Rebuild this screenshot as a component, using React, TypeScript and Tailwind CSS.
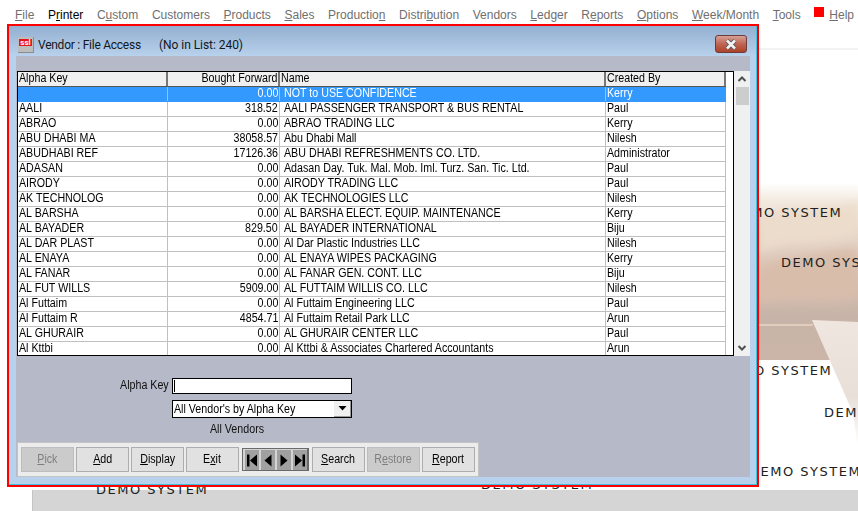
import React from "react";

const menu: [string, string, string][] = [
  ["", "F", "ile"], ["P", "r", "inter"], ["C", "u", "stom"], ["Customers", "", ""], ["", "P", "roducts"],
  ["", "S", "ales"], ["Productio", "n", ""], ["Distri", "b", "ution"], ["Vendors", "", ""], ["", "L", "edger"],
  ["R", "e", "ports"], ["", "O", "ptions"], ["", "W", "eek/Month"], ["", "T", "ools"],
];

const rows: [string, string, string, string][] = [
  ["", "0.00", "NOT to USE CONFIDENCE", "Kerry"],
  ["AALI", "318.52", "AALI PASSENGER TRANSPORT & BUS RENTAL", "Paul"],
  ["ABRAO", "0.00", "ABRAO TRADING LLC", "Kerry"],
  ["ABU DHABI MA", "38058.57", "Abu Dhabi Mall", "Nilesh"],
  ["ABUDHABI REF", "17126.36", "ABU DHABI REFRESHMENTS CO. LTD.", "Administrator"],
  ["ADASAN", "0.00", "Adasan Day. Tuk. Mal. Mob. Iml. Turz. San. Tic. Ltd.", "Paul"],
  ["AIRODY", "0.00", "AIRODY TRADING LLC", "Paul"],
  ["AK TECHNOLOG", "0.00", "AK TECHNOLOGIES LLC", "Nilesh"],
  ["AL BARSHA", "0.00", "AL BARSHA ELECT. EQUIP. MAINTENANCE", "Kerry"],
  ["AL BAYADER", "829.50", "AL BAYADER INTERNATIONAL", "Biju"],
  ["AL DAR PLAST", "0.00", "Al Dar Plastic Industries LLC", "Nilesh"],
  ["AL ENAYA", "0.00", "AL ENAYA WIPES PACKAGING", "Kerry"],
  ["AL FANAR", "0.00", "AL FANAR GEN. CONT. LLC", "Biju"],
  ["AL FUT WILLS", "5909.00", "AL FUTTAIM WILLIS CO. LLC", "Nilesh"],
  ["Al Futtaim", "0.00", "Al Futtaim Engineering LLC", "Paul"],
  ["Al Futtaim R", "4854.71", "Al Futtaim Retail Park LLC", "Arun"],
  ["AL GHURAIR", "0.00", "AL GHURAIR CENTER LLC", "Paul"],
  ["Al Kttbi", "0.00", "Al Kttbi & Associates Chartered Accountants", "Arun"],
];

const marks: [number, number, string][] = [
  [730, 206, "DEMO SYSTEM"], [781, 256, "DEMO SYSTEM"], [720, 364, "DEMO SYSTEM"],
  [824, 406, "DEMO SYSTEM"], [749, 465, "DEMO SYSTEM"], [96, 483, "DEMO SYSTEM"], [481, 478, "DEMO SYSTEM"],
];

/* The app's condensed system face: tall Arial-like glyphs, about 0.89 of normal width. */
function L({ children }: { children: React.ReactNode }) {
  return <span className="inline-block whitespace-nowrap origin-left scale-x-[0.89]">{children}</span>;
}
function R({ children }: { children: React.ReactNode }) {
  return <span className="inline-block whitespace-nowrap origin-right scale-x-[0.89]">{children}</span>;
}
function C({ children }: { children: React.ReactNode }) {
  return <span className="inline-block whitespace-nowrap origin-center scale-x-[0.89]">{children}</span>;
}

function Btn({ pre = "", u, post, off = false }: { pre?: string; u: string; post: string; off?: boolean }) {
  return (
    <div className={`w-[53px] h-[25px] border flex items-center justify-center ${off ? "bg-[#cbcbcb] border-[#bdbdbd] text-[#7f7f7f]" : "bg-[#e1e1e1] border-[#adadad] text-black"}`}>
      <C>{pre}<u>{u}</u>{post}</C>
    </div>
  );
}

function Nav({ d }: { d: string }) {
  return (
    <div className="w-[16px] h-full bg-[#a0a0a0] border-l-2 border-t border-[#d4d4d4] flex items-center justify-center">
      <svg width="12" height="15" viewBox="0 0 12 14"><path d={d} fill="#000" /></svg>
    </div>
  );
}

export default function App() {
  return (
    <div className="relative w-[858px] h-[511px] overflow-hidden bg-white text-[12px] leading-[15px] text-black" style={{ fontFamily: '"Liberation Sans", Arial, sans-serif' }}>
      {/* desktop backdrop */}
      <div className="absolute left-[759px] right-0 top-[48px] h-[2px] bg-[#f2f2f2]" />
      <svg className="absolute left-[759px] top-[178px]" width="99" height="190" viewBox="0 0 99 190">
        <defs>
          <linearGradient id="bg" x1="0" y1="0" x2="0" y2="1">
            <stop offset="0" stopColor="#fff" />
            <stop offset="0.1" stopColor="#f3eadf" />
            <stop offset="0.45" stopColor="#dcc7b8" />
            <stop offset="0.75" stopColor="#c8b3a8" />
            <stop offset="1" stopColor="#cbb5a8" />
          </linearGradient>
          <filter id="b"><feGaussianBlur stdDeviation="4" /></filter>
        </defs>
        <rect x="0" y="5" width="99" height="177" fill="url(#bg)" />
        <path d="M0 90 C25 80 60 75 99 70 L99 120 C60 125 30 118 0 125Z" fill="#d9bdab" filter="url(#b)" />
        <path d="M0 40 C30 25 60 35 99 25 L99 55 C60 70 30 60 0 75Z" fill="#ecdccb" filter="url(#b)" />
      </svg>
      <svg className="absolute left-[759px] top-[290px]" width="99" height="170" viewBox="0 0 99 170">
        <defs>
          <linearGradient id="cup" x1="0" y1="0" x2="0" y2="1">
            <stop offset="0" stopColor="#efe7df" />
            <stop offset="0.6" stopColor="#e8dfd8" />
            <stop offset="1" stopColor="#ffffff" />
          </linearGradient>
        </defs>
        <path d="M0 36 H53 L55 34 H0Z" fill="#e2cdbd" />
        <path d="M53 30 L99 32 L99 158 L94 123 Z" fill="url(#cup)" />
      </svg>
      <div className="absolute left-[32px] right-0 top-[490px] bottom-0 bg-[#d5d5d5] border-l border-[#c4c4c4]" />
      {marks.map(([x, y, t]) => (
        <div key={`${x}-${y}`} className="absolute whitespace-nowrap text-[13px] leading-[14px] text-[#221e20]" style={{ left: x, top: y, fontFamily: '"DejaVu Sans", sans-serif', letterSpacing: "1.5px" }}>{t}</div>
      ))}

      <div className="relative flex flex-col">
        {/* menu bar */}
        <div className="h-[24px] pl-[15px] pt-[8px] flex gap-[13.6px] text-[12px] text-[#6f6f6f] whitespace-nowrap">
          {menu.map(([a, b, c], i) => (
            <span key={i} className={i === 1 ? "text-black" : ""}>{a}{b && <u>{b}</u>}{c}</span>
          ))}
          <span className="flex gap-[5px] items-start">
            <span className="w-[10px] h-[10px] -mt-[1px] bg-[#ff0000]" />
            <span><u>H</u>elp</span>
          </span>
        </div>

        {/* window */}
        <div className="ml-[7px] w-[752px] h-[463px] border-2 border-[#ff0000]">
          <div className="h-full border-r border-b border-[#3fc3dc] bg-[#b8d1ec] flex flex-col">
            <div className="h-[30px] shrink-0 bg-gradient-to-b from-[#94afd0] to-[#b8d1ec] flex items-center pl-[9px] pr-[9px] pt-[7px] text-[#101820]" style={{ fontFamily: "Roboto, sans-serif" }}>
              <div className="w-[16px] h-[16px] bg-[#bdbdbd] border-r border-b border-[#8d8d8d] flex items-start justify-center">
                <span className="mt-[2px] px-[1px] bg-[#e8141c] text-white text-[8px] leading-[7px] font-bold">ssl</span>
              </div>
              <span className="ml-[4px] w-[121px] mt-[2px] tracking-[-0.25px]">Vendor : File Access</span>
              <span className="mt-[2px] tracking-[-0.05px]">(No in List: 240)</span>
              <div className="ml-auto w-[32px] h-[18px] mt-[-1px] rounded-[3px] border border-[#6e3a3c] bg-gradient-to-b from-[#d6a097] via-[#bf6552] to-[#ad4128] flex items-center justify-center">
                <svg width="16" height="11" viewBox="0 0 16 11">
                  <path d="M4 1.5 L12 9.5 M12 1.5 L4 9.5" stroke="#55555c" strokeWidth="4.4" />
                  <path d="M4 1.5 L12 9.5 M12 1.5 L4 9.5" stroke="#f4f4f4" strokeWidth="2.6" />
                </svg>
              </div>
            </div>

            <div className="ml-[7px] w-[734px] h-[421px] bg-[#b6b9c8] pt-[15px] pl-[1px] flex flex-col">
              {/* list */}
              <div className="flex h-[285px] shrink-0">
                <div className="w-[717px] border border-black bg-white overflow-hidden">
                  <div className="flex h-[14px] leading-[13px] bg-[#f0f0f0] w-[708px] border-b-2 border-[#555] box-content -mb-[1px]">
                    <div className="w-[150px] pl-[1px] border-r-2 border-[#777]"><L>Alpha Key</L></div>
                    <div className="w-[112px] text-right pr-[1px] border-r-2 border-[#777]"><R>Bought Forward</R></div>
                    <div className="w-[326px] pl-[1px] border-r-2 border-[#777]"><L>Name</L></div>
                    <div className="w-[120px] pl-[1px] border-r-2 border-[#777]"><L>Created By</L></div>
                  </div>
                  {rows.map((r, i) => (
                    <div key={i} className={`flex h-[15px] leading-[13px] w-[708px] border-b ${i === 0 ? "bg-[#3399ff] text-white border-[#3399ff]" : "border-[#c0c0c0]"}`}>
                      <div className={`w-[150px] pl-[1px] border-r ${i === 0 ? "border-[#8cc4ff]" : "border-[#c0c0c0]"}`}><L>{r[0]}</L></div>
                      <div className={`w-[112px] text-right pr-[1px] border-r ${i === 0 ? "border-[#8cc4ff]" : "border-[#c0c0c0]"}`}><R>{r[1]}</R></div>
                      <div className={`w-[326px] pl-[4px] border-r ${i === 0 ? "border-[#8cc4ff]" : "border-[#c0c0c0]"}`}><L>{r[2]}</L></div>
                      <div className={`w-[120px] pl-[1px] border-r ${i === 0 ? "border-[#3399ff]" : "border-[#c0c0c0]"}`}><L>{r[3]}</L></div>
                    </div>
                  ))}
                </div>
                <div className="w-[16px] bg-[#f0f0f0] flex flex-col items-center pt-[3px]">
                  <svg width="10" height="10" viewBox="0 0 10 10"><path d="M1.5 7 L5 3.5 L8.5 7" fill="none" stroke="#505050" strokeWidth="2" /></svg>
                  <div className="w-[13px] h-[18px] mt-[3px] bg-[#cdcdcd]" />
                  <div className="flex-1" />
                  <svg className="mb-[3px]" width="10" height="10" viewBox="0 0 10 10"><path d="M1.5 3 L5 6.5 L8.5 3" fill="none" stroke="#505050" strokeWidth="2" /></svg>
                </div>
              </div>

              {/* search form */}
              <div className="mt-[21px] flex items-center h-[17px]">
                <span className="w-[152px] text-right text-[#101010]"><R>Alpha Key</R></span>
                <div className="ml-[3px] w-[180px] h-[16px] bg-white border border-black flex items-center pl-[1px]">
                  <span className="w-[1px] h-[12px] bg-black" />
                </div>
              </div>
              <div className="mt-[6px] ml-[155px] w-[180px] h-[18px] bg-white border border-black flex items-center justify-between pl-[1px]">
                <L>All Vendor's by Alpha Key</L>
                <div className="w-[17px] h-[16px] bg-[#f0f0f0] border-r border-b border-[#9a9a9a] flex items-center justify-center">
                  <svg width="9" height="5" viewBox="0 0 9 5"><path d="M0.5 0 H8.5 L4.5 4.5Z" fill="#000" /></svg>
                </div>
              </div>
              <div className="mt-[4px] ml-[193px] text-[#101010]"><L>All Vendors</L></div>

              {/* toolbar */}
              <div className="mt-[5px] w-[462px] h-[35px] bg-[#ececec] border border-[#c4c4c4] pl-[3px] flex items-center">
                <div className="flex gap-[2px]">
                  <Btn u="P" post="ick" off />
                  <Btn u="A" post="dd" />
                  <Btn u="D" post="isplay" />
                  <Btn pre="E" u="x" post="it" />
                </div>
                <div className="ml-[3px] w-[67px] h-[23px] bg-[#6a6a6a] p-[1px] flex">
                  <Nav d="M1 1 H3.5 V13 H1Z M11 1 V13 L4 7Z" />
                  <Nav d="M9.5 1 V13 L2.5 7Z" />
                  <Nav d="M2.5 1 V13 L9.5 7Z" />
                  <Nav d="M1 1 L8 7 L1 13Z M8.5 1 H11 V13 H8.5Z" />
                </div>
                <div className="ml-[3px] flex gap-[2px]">
                  <Btn u="S" post="earch" />
                  <Btn pre="R" u="e" post="store" off />
                  <Btn u="R" post="eport" />
                </div>
              </div>
            </div>
          </div>
        </div>
      </div>
    </div>
  );
}
